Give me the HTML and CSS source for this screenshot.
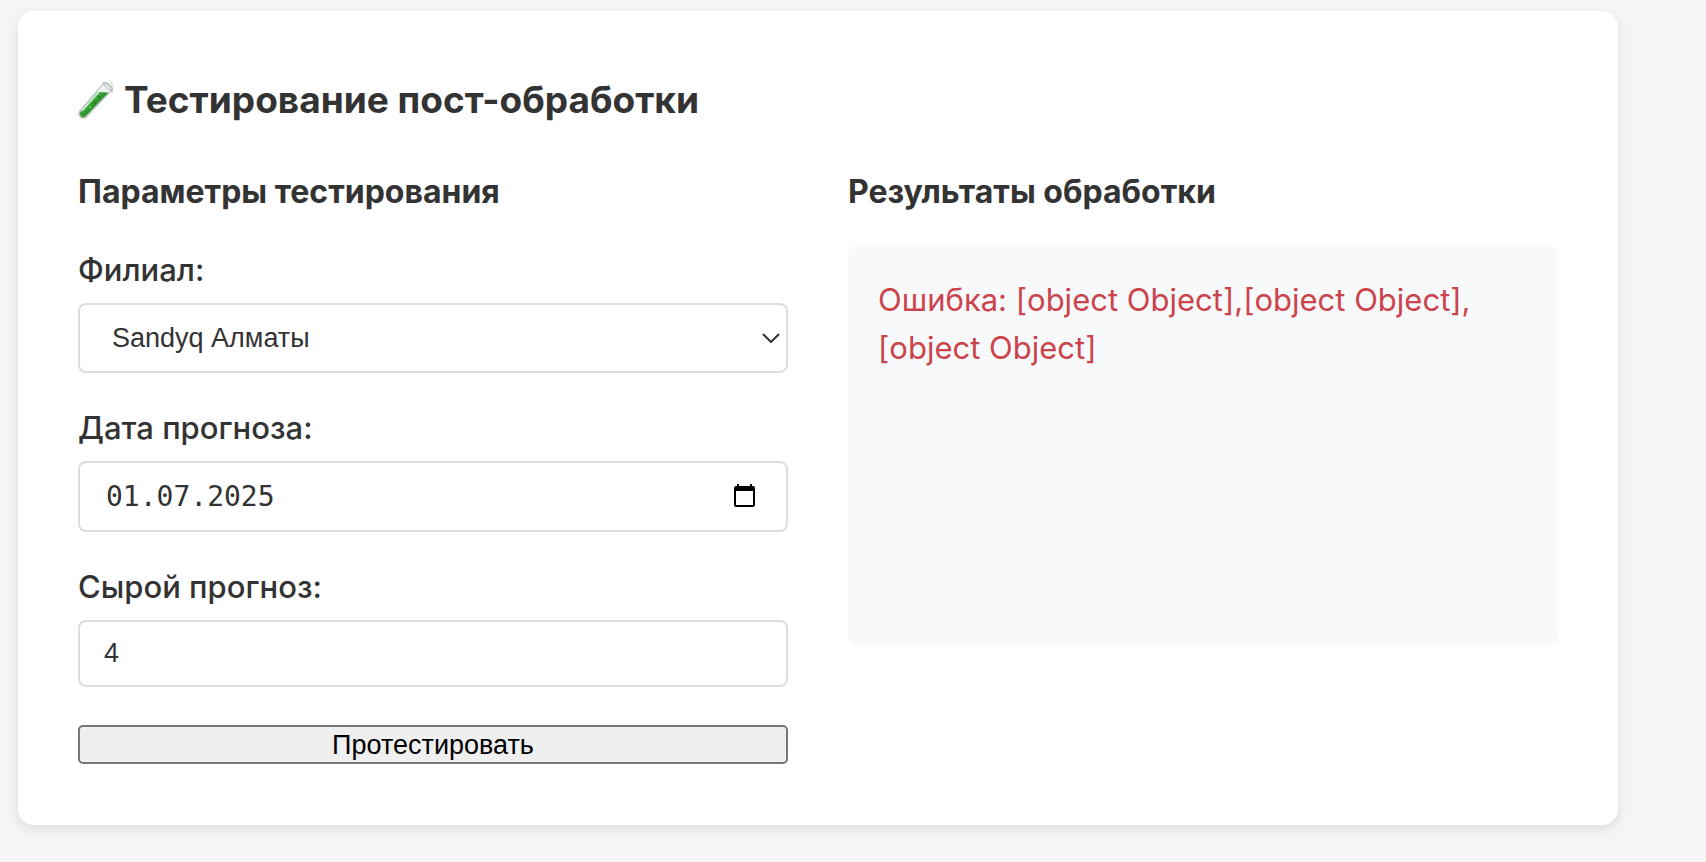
FILE: index.html
```html
<!DOCTYPE html>
<html lang="ru">
<head>
<meta charset="utf-8">
<meta name="viewport" content="width=device-width, initial-scale=1">
<title>Тестирование пост-обработки</title>
<link rel="stylesheet" href="styles.css">
</head>
<body>
<main class="card">
  <h2 class="card-title">
    <svg class="tube" viewBox="0 0 36 38" aria-hidden="true">
      <defs>
        <linearGradient id="liquid" x1="10" y1="18" x2="17" y2="25" gradientUnits="userSpaceOnUse">
          <stop offset="0" stop-color="#8fd08c"/>
          <stop offset=".35" stop-color="#3fa83a"/>
          <stop offset="1" stop-color="#2a8f2b"/>
        </linearGradient>
      </defs>
      <path d="M25 3 L33 10 L8.500 36 Q5 38.500 2.200 36 Q-.5 33 2 29.500 Z" fill="#eef2f1" stroke="#a3adab" stroke-width="1"/>
      <path d="M19.500 11 L30.500 11.500 L8 35 Q5 37.500 2.800 35.300 Q.7 33 3 30 Z" fill="url(#liquid)"/>
      <path d="M21 11 L4 30" stroke="#c9ecd0" stroke-width="1.500" fill="none"/>
      <circle cx="21" cy="16" r="1" fill="#1f7d20"/>
      <circle cx="17" cy="22" r="1" fill="#1b701c"/>
      <circle cx="12" cy="26" r="1" fill="#6cd365"/>
      <path d="M25.500 2.500 Q28 1 31 4.500 Q35 7 33.500 10" fill="none" stroke="#bfc3c3" stroke-width="2.500" stroke-linecap="round"/>
      <circle cx="33.500" cy="2" r="1.300" fill="#b5ecb5"/>
      <circle cx="35" cy="5" r=".8" fill="#b5ecb5"/>
    </svg>
    <span>Тестирование пост-обработки</span>
  </h2>
  <div class="columns">
    <form class="column">
      <h3 class="section-title">Параметры тестирования</h3>
      <div class="field">
        <label class="label" for="branch">Филиал:</label>
        <div class="control-wrap">
          <select class="control control-select" id="branch">
            <option>Sandyq Алматы</option>
          </select>
          <svg class="chevron" viewBox="0 0 18 10" aria-hidden="true"><path d="M1 1 L9 9 L17 1" fill="none" stroke="#333" stroke-width="2"/></svg>
        </div>
      </div>
      <div class="field">
        <label class="label" for="date">Дата прогноза:</label>
        <div class="control-wrap">
          <input class="control control-date" id="date" type="text" value="01.07.2025">
          <button class="picker" type="button" aria-label="Открыть календарь">
            <svg class="calendar" viewBox="0 0 21 23" aria-hidden="true"><path d="M3 0h2v2h11V0h2v2h1a2 2 0 0 1 2 2v17a2 2 0 0 1-2 2H2a2 2 0 0 1-2-2V4a2 2 0 0 1 2-2h1zM2 7v14h17V7z" fill="#000" fill-rule="evenodd"/></svg>
          </button>
        </div>
      </div>
      <div class="field">
        <label class="label" for="raw">Сырой прогноз:</label>
        <input class="control control-number" id="raw" type="number" value="4">
      </div>
      <button class="submit" type="button">Протестировать</button>
    </form>
    <section class="column">
      <h3 class="section-title">Результаты обработки</h3>
      <div class="results">
        <p class="error">Ошибка: [object Object],<wbr>[object Object],<wbr>[object Object]</p>
      </div>
    </section>
  </div>
</main>
</body>
</html>
```
FILE: styles.css
```css
* {
  box-sizing: border-box;
}

body {
  min-height: 100vh;
  margin: 0;
  padding: 11px 88px 30px 18px;
  background: #f5f5f5;
  color: #333;
  font-family: Inter, "Noto Sans", sans-serif;
  font-size: 31px;
  line-height: 48px;
}

.card {
  max-width: 1600px;
  padding: 61px 60px;
  background: #fff;
  border-radius: 16px;
  box-shadow: 0 4px 12px rgba(0, 0, 0, 0.1);
}

.card-title {
  display: flex;
  align-items: center;
  gap: 10px;
  margin: 0 0 40px;
  font-size: 37px;
  line-height: 56px;
  font-weight: 700;
}

.tube {
  width: 36px;
  height: 38px;
  overflow: visible;
}

.columns {
  display: grid;
  grid-template-columns: 1fr 1fr;
  gap: 60px;
}

.column {
  display: flex;
  flex-direction: column;
  min-width: 0;
}

.section-title {
  margin: 0 0 29px;
  font-size: 32px;
  font-weight: 700;
}

.field {
  display: flex;
  flex-direction: column;
  gap: 8px;
  margin-bottom: 30px;
}

.label {
  font-weight: 500;
  line-height: 50px;
}

.control-wrap {
  position: relative;
}

.control {
  display: block;
  width: 100%;
  height: 70px;
  padding: 0 24px;
  border: 2px solid #ddd;
  border-radius: 8px;
  background: #fff;
  color: #333;
  font-family: "Liberation Sans", sans-serif;
  font-size: 27px;
}

.control-select {
  appearance: none;
  padding: 0 32px;
}

.control-date {
  height: 71px;
  padding: 0 26px;
  font-family: "DejaVu Sans Mono", monospace;
  font-size: 28px;
}

.control-number {
  height: 67px;
  appearance: textfield;
}

.control-number::-webkit-inner-spin-button {
  appearance: none;
}

.chevron {
  position: absolute;
  top: 30px;
  right: 8px;
  width: 18px;
  height: 10px;
  pointer-events: none;
}

.picker {
  position: absolute;
  top: 23px;
  right: 33px;
  display: flex;
  padding: 0;
  border: 0;
  background: none;
}

.calendar {
  width: 21px;
  height: 23px;
}

.submit {
  height: 39px;
  margin-top: 8px;
  padding: 0 12px;
  border: 2px solid #767676;
  border-radius: 5px;
  background: #efefef;
  color: #000;
  font-family: "Liberation Sans", sans-serif;
  font-size: 27px;
  line-height: 32px;
}

.results {
  min-height: 400px;
  padding: 31px 30px;
  border-radius: 10px;
  background: #f8f9fb;
}

.error {
  margin: 0;
  color: #cc444b;
}
```
